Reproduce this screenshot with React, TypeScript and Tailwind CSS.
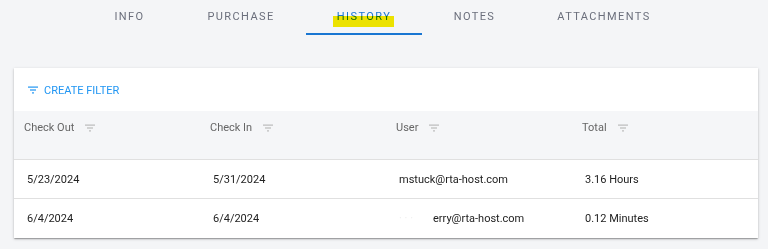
import React from "react";

const tabs = [
  { label: "Info", w: "w-[93px]" },
  { label: "Purchase", w: "w-[130px]" },
  { label: "History", w: "w-[116px]", active: true },
  { label: "Notes", w: "w-[105px]" },
  { label: "Attachments", w: "w-[154px]" },
];

const rows = [
  { out: "5/23/2024", in: "5/31/2024", hidden: false, user: "mstuck@rta-host.com", total: "3.16 Hours" },
  { out: "6/4/2024", in: "6/4/2024", hidden: true, user: "erry@rta-host.com", total: "0.12 Minutes" },
];

const FilterIcon = ({ className }: { className?: string }) => (
  <svg width="10" height="8" viewBox="0 0 10 8" className={className}>
    <rect x="0" y="0.5" width="10" height="1.2" fill="currentColor" />
    <rect x="2" y="3.4" width="6" height="1.2" fill="currentColor" />
    <rect x="4" y="6.3" width="2" height="1.2" fill="currentColor" />
  </svg>
);

const App = () => {
  return (
    <div className="w-[768px] h-[249px] bg-[#f4f5f7] font-['Roboto',sans-serif] overflow-hidden">
      {/* tabs */}
      <div className="flex h-[35px] pl-[83px]">
        {tabs.map((tab, index) => (
          <div
            key={index}
            className={`${tab.w} flex justify-center pt-[10px] text-[11px] uppercase tracking-[1.4px] ${
              tab.active ? "border-b-2 border-[#1976d2] text-[#1976d2]" : "text-[#6b6f7c]"
            }`}
          >
            <span className="relative leading-[13px]">
              {tab.label}
              {tab.active && (
                <span className="absolute left-[-4px] right-[-3px] top-[6px] h-[11px] bg-[#f7ec00] mix-blend-multiply" />
              )}
            </span>
          </div>
        ))}
      </div>

      {/* history card */}
      <div className="mx-[14px] mt-[33px] w-[744px] bg-white shadow-[0_1px_3px_rgba(0,0,0,0.2),0_1px_1px_rgba(0,0,0,0.14),0_2px_1px_-1px_rgba(0,0,0,0.12)]">
        <div className="flex items-center h-[43px] pl-[14px] gap-[6px] text-[#2196f3]">
          <FilterIcon className="mt-[1px]" />
          <span className="text-[11px] uppercase leading-none mt-[1px]">Create Filter</span>
        </div>

        <div className="grid grid-cols-4 h-[49px] bg-[#f5f6f8] border-b border-[#e0e0e0]">
          {["Check Out", "Check In", "User", "Total"].map((h, i) => (
            <div key={i} className="flex items-start gap-[11px] pl-[10px] pt-[10px] text-[11px] text-[#666]">
              <span className="leading-[13px]">{h}</span>
              <FilterIcon className="text-[#bbb] mt-[3px]" />
            </div>
          ))}
        </div>

        {rows.map((row, index) => (
          <div
            key={index}
            className={`grid grid-cols-4 h-[39px] items-center pt-[2px] text-[11px] text-[#222] ${
              index === 0 ? "border-b border-[#e0e0e0]" : ""
            }`}
          >
            <div className="pl-[13px]">{row.out}</div>
            <div className="pl-[13px]">{row.in}</div>
            <div className="pl-[13px] flex">
              {row.hidden && <span className="inline-block w-[34px] text-[#eee]">· ·  · </span>}
              <span>{row.user}</span>
            </div>
            <div className="pl-[13px]">{row.total}</div>
          </div>
        ))}
      </div>
    </div>
  );
};

export default App;
